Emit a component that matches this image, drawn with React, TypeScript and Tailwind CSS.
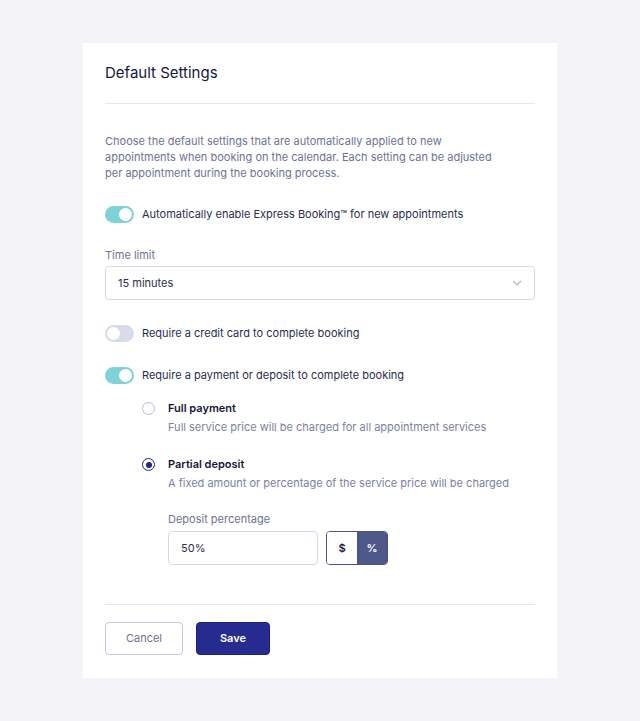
import { useState } from "react";

const Toggle = ({ on, onClick }: { on: boolean; onClick: () => void }) => (
  <button
    type="button"
    onClick={onClick}
    className={`relative h-[17px] w-[29px] shrink-0 rounded-full transition-colors ${
      on ? "bg-[#7fd3d6]" : "bg-[#d8dbea]"
    }`}
  >
    <span
      className={`absolute top-[2px] h-[13px] w-[13px] rounded-full bg-white ${
        on ? "left-[14px]" : "left-[2px]"
      }`}
    />
  </button>
);

const Radio = ({ checked }: { checked: boolean }) => (
  <span
    className={`mt-[1px] flex h-[13px] w-[13px] shrink-0 items-center justify-center rounded-full border-[1.5px] ${
      checked ? "border-[#1f2690]" : "border-[#b9bdd6]"
    }`}
  >
    {checked && <span className="h-[6px] w-[6px] rounded-full bg-[#1f2690]" />}
  </span>
);

export default function App() {
  const [express, setExpress] = useState(true);
  const [card, setCard] = useState(false);
  const [deposit, setDeposit] = useState(true);
  const [mode, setMode] = useState<"full" | "partial">("partial");
  const [unit, setUnit] = useState<"$" | "%">("%");

  return (
    <div
      className="min-h-[721px] bg-[#f3f3f8] pt-[43px] text-[11px] text-[#22254a]"
      style={{ fontFamily: "Inter, 'Noto Sans', sans-serif" }}
    >
      <div className="mx-auto w-[474px] bg-white px-[22px] pb-[23px]">
        {/* Header */}
        <div className="border-b border-[#e4e6f0] pb-[20px] pt-[20px]">
          <h1 className="text-[15px] font-normal leading-[20px] text-[#14173d]">
            Default Settings
          </h1>
        </div>

        <p className="mt-[29px] pr-[30px] text-[11px] leading-[16px] text-[#6e7297]">
          Choose the default settings that are automatically applied to new
          appointments when booking on the calendar. Each setting can be adjusted
          per appointment during the booking process.
        </p>

        {/* Express booking */}
        <div className="mt-[25px] flex items-center gap-[8px]">
          <Toggle on={express} onClick={() => setExpress(!express)} />
          <span className="text-[11px] text-[#2a2d52]">
            Automatically enable Express Booking™ for new appointments
          </span>
        </div>

        <div className="mt-[25px]">
          <label className="block text-[11px] leading-[14px] text-[#6e7297]">
            Time limit
          </label>
          <div className="mt-[4px] flex h-[34px] items-center justify-between rounded-[4px] border border-[#d5d8e6] pl-[12px] pr-[12px]">
            <span className="text-[11px] text-[#2a2d52]">15 minutes</span>
            <svg width="10" height="6" viewBox="0 0 10 6" fill="none">
              <path d="M1 1l4 4 4-4" stroke="#b4b8cc" strokeWidth="1.2" />
            </svg>
          </div>
        </div>

        {/* Credit card */}
        <div className="mt-[25px] flex items-center gap-[8px]">
          <Toggle on={card} onClick={() => setCard(!card)} />
          <span className="text-[11px] text-[#2a2d52]">
            Require a credit card to complete booking
          </span>
        </div>

        {/* Payment or deposit */}
        <div className="mt-[25px] flex items-center gap-[8px]">
          <Toggle on={deposit} onClick={() => setDeposit(!deposit)} />
          <span className="text-[11px] text-[#2a2d52]">
            Require a payment or deposit to complete booking
          </span>
        </div>

        <div className="ml-[37px] mt-[17px] flex flex-col gap-[22px]">
          <button
            type="button"
            onClick={() => setMode("full")}
            className="flex items-start gap-[13px] text-left"
          >
            <Radio checked={mode === "full"} />
            <div>
              <div className="text-[11px] font-semibold leading-[15px] text-[#14173d]">
                Full payment
              </div>
              <div className="mt-[4px] text-[11px] leading-[15px] text-[#7b7fa3]">
                Full service price will be charged for all appointment services
              </div>
            </div>
          </button>

          <button
            type="button"
            onClick={() => setMode("partial")}
            className="flex items-start gap-[13px] text-left"
          >
            <Radio checked={mode === "partial"} />
            <div>
              <div className="text-[11px] font-semibold leading-[15px] text-[#14173d]">
                Partial deposit
              </div>
              <div className="mt-[4px] text-[11px] leading-[15px] text-[#7b7fa3]">
                A fixed amount or percentage of the service price will be charged
              </div>
            </div>
          </button>

          <div className="ml-[26px] -mt-[1px]">
            <label className="block text-[11px] leading-[14px] text-[#6e7297]">
              Deposit percentage
            </label>
            <div className="mt-[5px] flex items-center gap-[8px]">
              <div className="flex h-[34px] w-[150px] items-center rounded-[4px] border border-[#d5d8e6] px-[12px] text-[11px] text-[#2a2d52]">
                50%
              </div>
              <div className="flex h-[34px] overflow-hidden rounded-[4px] border border-[#4b5483]">
                <button
                  type="button"
                  onClick={() => setUnit("$")}
                  className={`w-[30px] text-[11px] font-semibold ${
                    unit === "$" ? "bg-[#4e5887] text-white" : "bg-white text-[#14173d]"
                  }`}
                >
                  $
                </button>
                <button
                  type="button"
                  onClick={() => setUnit("%")}
                  className={`w-[30px] text-[11px] font-semibold ${
                    unit === "%" ? "bg-[#4e5887] text-white" : "bg-white text-[#14173d]"
                  }`}
                >
                  %
                </button>
              </div>
            </div>
          </div>
        </div>

        {/* Actions */}
        <div className="mt-[39px] flex gap-[13px] border-t border-[#e4e6f0] pt-[17px]">
          <button
            type="button"
            className="h-[33px] w-[78px] rounded-[4px] border border-[#c5c8dc] bg-white text-[11px] text-[#6e7297]"
          >
            Cancel
          </button>
          <button
            type="button"
            className="h-[33px] w-[74px] rounded-[4px] border border-[#1a1f80] bg-[#262b8f] text-[11px] font-semibold text-white"
          >
            Save
          </button>
        </div>
      </div>
    </div>
  );
}
